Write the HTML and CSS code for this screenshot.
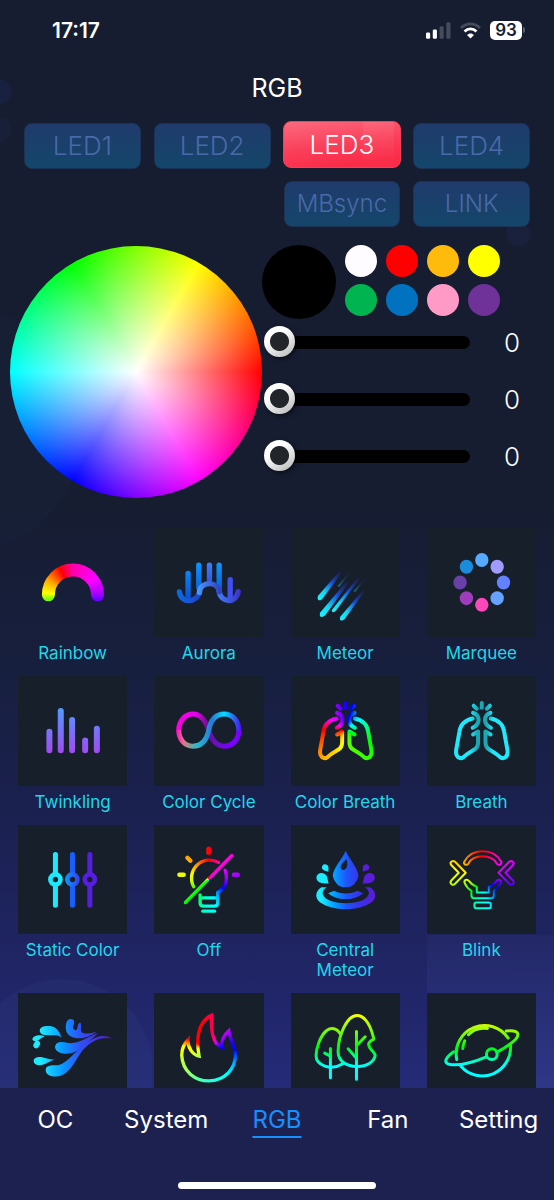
FILE: index.html
```html
<!DOCTYPE html>
<html lang="en">
<head>
    <title>RGB</title>
    <meta charset="UTF-8">
    <meta name="viewport" content="width=device-width, initial-scale=1.0">
    <link rel="stylesheet" href="styles.css">
</head>
<body>
  <div class="app">
    <div class="status-bar">
      <span class="time">17:17</span>
      <div class="status-icons">
        <svg class="signal" viewBox="0 0 24 16">
          <rect x="0" y="10" width="4" height="6" rx="1.3" fill="#fff"/>
          <rect x="6.5" y="7" width="4" height="9" rx="1.3" fill="#fff"/>
          <rect x="13" y="4" width="4" height="12" rx="1.3" fill="#454b5b"/>
          <rect x="19.5" y="0" width="4" height="16" rx="1.3" fill="#454b5b"/>
        </svg>
        <svg class="wifi" viewBox="0 0 60 48" fill="none" stroke-width="8">
          <path d="M3 17 C18 1 42 1 57 17" stroke="#454b5b"/>
          <path d="M13 27 C23 17 37 17 47 27" stroke="#fff"/>
          <path d="M20 37 C26 31 34 31 40 37 L30 47Z" fill="#fff"/>
        </svg>
        <span class="battery">93</span>
      </div>
    </div>

    <h1 class="title">RGB</h1>

    <div class="channels">
      <button class="channel">LED1</button>
      <button class="channel">LED2</button>
      <button class="channel active">LED3</button>
      <button class="channel">LED4</button>
      <button class="channel small third">MBsync</button>
      <button class="channel small">LINK</button>
    </div>

    <div class="picker">
      <div class="wheel"></div>
      <div class="controls">
        <div class="colors">
          <div class="current"></div>
          <div class="swatches">
            <button class="swatch white" aria-label="White"></button>
            <button class="swatch red" aria-label="Red"></button>
            <button class="swatch orange" aria-label="Orange"></button>
            <button class="swatch yellow" aria-label="Yellow"></button>
            <button class="swatch green" aria-label="Green"></button>
            <button class="swatch blue" aria-label="Blue"></button>
            <button class="swatch pink" aria-label="Pink"></button>
            <button class="swatch purple" aria-label="Purple"></button>
          </div>
        </div>
        <div class="slider-row">
          <input type="range" id="red" min="0" max="255" value="0" aria-label="Red">
          <output for="red">0</output>
        </div>
        <div class="slider-row">
          <input type="range" id="green" min="0" max="255" value="0" aria-label="Green">
          <output for="green">0</output>
        </div>
        <div class="slider-row">
          <input type="range" id="blue" min="0" max="255" value="0" aria-label="Blue">
          <output for="blue">0</output>
        </div>
      </div>
    </div>

    <div class="effects">
      <button class="effect selected">
        <svg class="tile" viewBox="52 26 327 327">
          <mask id="rainbowMask"><path d="M143 226 A73 74 0 0 1 290 226" fill="none" stroke="#fff" stroke-width="39" stroke-linecap="round"/></mask>
          <foreignObject x="52" y="26" width="327" height="327" mask="url(#rainbowMask)"><div class="hue hue-rainbow"></div></foreignObject>
        </svg>
        <span>Rainbow</span>
      </button>

      <button class="effect">
        <svg class="tile" viewBox="462 26 327 327" fill="none" stroke-linecap="round">
          <linearGradient id="barBlue" gradientUnits="userSpaceOnUse" x1="0" y1="130" x2="0" y2="240"><stop offset="0" stop-color="#0a95ff"/><stop offset="1" stop-color="#0b4fcf"/></linearGradient>
          <linearGradient id="barSoft" gradientUnits="userSpaceOnUse" x1="0" y1="130" x2="0" y2="200"><stop offset="0" stop-color="#3b7dfb"/><stop offset="1" stop-color="#3150d8"/></linearGradient>
          <linearGradient id="waveA" gradientUnits="userSpaceOnUse" x1="530" y1="0" x2="605" y2="0"><stop offset="0" stop-color="#0a6be0"/><stop offset="1" stop-color="#2340c8"/></linearGradient>
          <linearGradient id="waveB" gradientUnits="userSpaceOnUse" x1="590" y1="0" x2="665" y2="0"><stop offset="0" stop-color="#4a9bff"/><stop offset="1" stop-color="#2b3bbd"/></linearGradient>
          <linearGradient id="waveC" gradientUnits="userSpaceOnUse" x1="650" y1="0" x2="722" y2="0"><stop offset="0" stop-color="#4280f5"/><stop offset="1" stop-color="#3a30c8"/></linearGradient>
          <g stroke-width="16">
            <path d="M564 162V236M596 137V205M657 137V212" stroke="url(#barBlue)"/>
            <path d="M628 137V182" stroke="url(#barSoft)"/>
            <path d="M690 181V232" stroke="#4050ee"/>
            <path d="M538 217C542 252 590 252 598 217" stroke="url(#waveA)"/>
            <path d="M657 215C662 252 708 252 714 217" stroke="url(#waveC)"/>
            <path d="M598 219C600 184 654 184 657 217" stroke="url(#waveB)"/>
          </g>
        </svg>
        <span>Aurora</span>
      </button>

      <button class="effect">
        <svg class="tile" viewBox="42 26 327 327">
          <linearGradient id="trail" x1="0" y1="1" x2="1" y2="0"><stop offset="0" stop-color="#1ef3ff"/><stop offset=".28" stop-color="#14d5f5"/><stop offset=".6" stop-color="#1550d8"/><stop offset="1" stop-color="#2a1a80" stop-opacity=".2"/></linearGradient>
          <linearGradient id="trailDim" x1="0" y1="1" x2="1" y2="0"><stop offset="0" stop-color="#1b6b80"/><stop offset="1" stop-color="#1b2a50" stop-opacity=".2"/></linearGradient>
          <g fill="url(#trail)">
            <path d="M123 229L188 155L194 160L135 239Q127 245 123 241Q120 236 123 229Z"/>
            <path d="M130 278L208 186L218 186L144 288Q134 295 129 290Q126 284 130 278Z"/>
            <path d="M166 269L242 174L248 178L175 275Q168 280 165 277Q163 273 166 269Z"/>
            <path d="M190 291L256 214L262 217L202 299Q194 305 189 301Q187 296 190 291Z"/>
          </g>
          <g fill="url(#trailDim)">
            <path d="M183 197L224 150L188 202Q182 205 183 197Z"/>
            <path d="M231 212L266 174L236 216Q230 220 231 212Z"/>
          </g>
        </svg>
        <span>Meteor</span>
      </button>

      <button class="effect">
        <svg class="tile" viewBox="451 26 327 327">
          <ellipse cx="615" cy="122" rx="20" ry="21" fill="#56aaff"/>
          <ellipse cx="661" cy="142" rx="20" ry="21" fill="#a09cff"/>
          <ellipse cx="680" cy="189" rx="20" ry="21" fill="#6282ff"/>
          <ellipse cx="661" cy="236" rx="20" ry="21" fill="#66a2ff"/>
          <ellipse cx="615" cy="256" rx="20" ry="21" fill="#ff46bb"/>
          <ellipse cx="569" cy="236" rx="20" ry="21" fill="#9f3cbb"/>
          <ellipse cx="550" cy="189" rx="20" ry="21" fill="#6840a8"/>
          <ellipse cx="569" cy="142" rx="20" ry="21" fill="#1b8cdb"/>
        </svg>
        <span>Marquee</span>
      </button>

      <button class="effect">
        <svg class="tile" viewBox="52 21 327 327">
          <linearGradient id="twinkle" gradientUnits="userSpaceOnUse" x1="0" y1="117" x2="0" y2="250"><stop offset="0" stop-color="#5299ff"/><stop offset="1" stop-color="#a04cf0"/></linearGradient>
          <path d="M146 188V243M180 126V243M214 153V243M253 214V243M288 179V243" stroke="url(#twinkle)" stroke-width="18" stroke-linecap="round"/>
        </svg>
        <span>Twinkling</span>
      </button>

      <button class="effect">
        <svg class="tile" viewBox="462 21 327 327" fill="none" stroke-width="15">
          <linearGradient id="cycleUnder" gradientUnits="userSpaceOnUse" x1="530" y1="0" x2="690" y2="0"><stop offset="0" stop-color="#ff00e0"/><stop offset=".35" stop-color="#e800f0"/><stop offset=".58" stop-color="#6a0f90"/><stop offset=".72" stop-color="#6a10c0"/><stop offset="1" stop-color="#7a00ff"/></linearGradient>
          <linearGradient id="cycleOver" gradientUnits="userSpaceOnUse" x1="530" y1="0" x2="722" y2="0"><stop offset="0" stop-color="#ff10c8"/><stop offset=".1" stop-color="#e8708a"/><stop offset=".2" stop-color="#8a9c90"/><stop offset=".32" stop-color="#22bcd0"/><stop offset=".55" stop-color="#2a78d8"/><stop offset=".74" stop-color="#00e0ff"/><stop offset=".9" stop-color="#3060ee"/><stop offset="1" stop-color="#4a10ff"/></linearGradient>
          <path d="M536 184C536 156 554 135 578 135C602 135 616 152 626 183C634 212 650 231 673 231C698 231 716 210 716 183" stroke="url(#cycleUnder)"/>
          <path d="M536 183C536 213 556 231 578 231C606 231 620 212 626 183C632 152 648 135 672 135C698 135 716 156 716 184" stroke="url(#cycleOver)"/>
        </svg>
        <span>Color Cycle</span>
      </button>

      <button class="effect">
        <svg class="tile" viewBox="42 21 327 327">
          <defs>
            <g id="lungHalf">
              <path d="M182 110L191 119M180 131C202 139 202 165 179 176"/>
              <path d="M179 148C155 153 142 166 139 188L129 244C127 263 140 271 151 264C165 250 173 248 183 242C193 236 195 231 195 220V187L180 196"/>
            </g>
            <g id="lungs" fill="none" stroke-width="12" stroke-linecap="round" stroke-linejoin="round">
              <path d="M206 102V116"/>
              <use href="#lungHalf"/>
              <use href="#lungHalf" transform="matrix(-1 0 0 1 412 0)"/>
            </g>
          </defs>
          <mask id="lungMask"><use href="#lungs" stroke="#fff"/></mask>
          <foreignObject x="42" y="21" width="327" height="327" mask="url(#lungMask)"><div class="hue hue-breath"></div></foreignObject>
        </svg>
        <span>Color Breath</span>
      </button>

      <button class="effect">
        <svg class="tile" viewBox="42 21 327 327">
          <linearGradient id="breath" gradientUnits="userSpaceOnUse" x1="121" y1="0" x2="291" y2="0"><stop offset=".3" stop-color="#1eeafc"/><stop offset=".42" stop-color="#1ca6b2"/><stop offset=".58" stop-color="#1ca6b2"/><stop offset=".7" stop-color="#1eeafc"/></linearGradient>
          <mask id="breathMask"><use href="#lungs" stroke="#fff"/></mask>
          <rect x="42" y="21" width="327" height="327" fill="url(#breath)" mask="url(#breathMask)"/>
        </svg>
        <span>Breath</span>
      </button>

      <button class="effect">
        <svg class="tile" viewBox="52 15 327 327" fill="none" stroke-linecap="round">
          <linearGradient id="knob" gradientUnits="userSpaceOnUse" x1="194" y1="0" x2="237" y2="0"><stop offset="0" stop-color="#0a98ff"/><stop offset="1" stop-color="#3c38ec"/></linearGradient>
          <g stroke="#1ce9fc"><path d="M164 103V160M164 196V255" stroke-width="15"/><circle cx="164" cy="178" r="15" stroke-width="14"/></g>
          <g stroke="#1560ff"><path d="M215 103V160M215 196V255" stroke-width="15"/><circle cx="215" cy="178" r="15" stroke="url(#knob)" stroke-width="14"/></g>
          <g stroke="#561fdf"><path d="M267 103V160M267 196V255" stroke-width="15"/><circle cx="267" cy="178" r="15" stroke-width="14"/></g>
        </svg>
        <span>Static Color</span>
      </button>

      <button class="effect">
        <svg class="tile" viewBox="462 15 327 327">
          <mask id="offMask">
            <g fill="none" stroke="#fff" stroke-width="10" stroke-linecap="round">
              <path d="M655 127A54 54 0 0 0 581 200"/>
              <path d="M675 151C685 182 676 203 653 217V248Q653 258 643 258H610Q600 258 600 248V224M600 233H653"/>
              <path d="M608 273H643"/>
              <path d="M556 247L695 106"/>
              <path d="M626 87V97" stroke-width="15"/>
              <path d="M562 113L571 122M538 164H551M701 164H713" stroke-width="13"/>
            </g>
          </mask>
          <foreignObject x="462" y="15" width="327" height="327" mask="url(#offMask)"><div class="hue hue-bulb"></div></foreignObject>
        </svg>
        <span>Off</span>
      </button>

      <button class="effect">
        <svg class="tile" viewBox="42 15 327 327">
          <linearGradient id="splash" gradientUnits="userSpaceOnUse" x1="118" y1="0" x2="294" y2="0"><stop offset=".08" stop-color="#1eeafe"/><stop offset=".3" stop-color="#00a2ff"/><stop offset=".52" stop-color="#1f55fa"/><stop offset=".75" stop-color="#3b30e8"/><stop offset="1" stop-color="#5c1bd6"/></linearGradient>
          <g fill="url(#splash)" fill-rule="evenodd">
            <path d="M206 92C195 118 167 145 167 168A39 40 0 0 0 244 168C244 145 216 118 206 92ZM208 117C198 128 190 134 191 143C193 154 207 152 210 138C211 130 211 124 208 117Z"/>
            <path d="M171 212C190 223 222 223 241 212L258 219C230 243 182 243 153 219Z"/>
            <path d="M133 201H149C120 220 145 248 206 249C267 248 292 220 263 201H278C300 215 298 235 282 247C245 274 167 274 130 247C114 235 112 215 133 201Z"/>
          </g>
          <g fill="#1eeafe"><path d="M135 139C139 129 152 132 154 141V155C147 152 131 150 135 139Z"/><path d="M118 172C119 155 144 154 150 170C152 177 152 183 155 190C143 191 118 190 118 172Z"/></g>
          <g fill="#5a1dd9" transform="matrix(-1 0 0 1 411 0)"><path d="M135 139C139 129 152 132 154 141V155C147 152 131 150 135 139Z"/><path d="M118 172C119 155 144 154 150 170C152 177 152 183 155 190C143 191 118 190 118 172Z"/></g>
        </svg>
        <span>Central Meteor</span>
      </button>

      <button class="effect">
        <svg class="tile" viewBox="451 15 327 327">
          <mask id="blinkMask">
            <g fill="none" stroke="#fff" stroke-width="6" stroke-linejoin="round">
              <path d="M563 124C585 83 650 83 673 124C677 133 665 138 660 130C644 101 590 101 575 130C570 138 558 133 563 124Z"/>
              <path d="M523 134C518 127 528 119 535 125L567 158L535 191C528 198 518 190 523 182L546 158Z"/>
              <path d="M709 134C714 127 704 119 697 125L665 158L697 191C704 198 714 190 709 182L686 158Z"/>
              <path d="M564 189C560 179 571 175 577 183C583 192 590 196 600 200V217H636V200C646 196 653 192 659 183C664 175 676 180 672 189C665 202 658 207 651 212V226Q651 234 643 234H592Q584 234 584 226V212C576 207 569 202 564 189Z"/>
              <rect x="593" y="247" width="49" height="17" rx="5"/>
            </g>
          </mask>
          <foreignObject x="451" y="15" width="327" height="327" mask="url(#blinkMask)"><div class="hue hue-bulb"></div></foreignObject>
        </svg>
        <span>Blink</span>
      </button>

      <button class="effect" aria-label="Wave">
        <svg class="tile" viewBox="52 40 327 327">
          <linearGradient id="wave" gradientUnits="userSpaceOnUse" x1="95" y1="0" x2="335" y2="0"><stop offset=".1" stop-color="#1eeafe"/><stop offset=".38" stop-color="#0898ff"/><stop offset=".6" stop-color="#3050f5"/><stop offset="1" stop-color="#5a18c8"/></linearGradient>
          <g fill="url(#wave)">
            <path d="M135 272C134 256 150 256 170 256C210 250 235 187 295 170C312 166 325 172 335 176C300 170 275 180 247 210C225 236 208 290 165 290C148 290 136 284 135 272Z"/>
            <path d="M163 203C163 186 182 184 202 190C235 194 260 170 294 160C264 180 238 222 197 222C178 222 164 214 163 203Z"/>
            <path d="M195 145C195 130 198 118 210 118C225 118 220 132 217 142C216 152 228 155 230 145C231 135 233 129 238 129C244 132 238 150 243 158C255 164 275 160 288 155C270 170 245 178 225 175C205 172 195 160 195 145Z"/>
            <path d="M117 152C117 140 135 137 148 139C168 142 176 155 182 173C170 163 150 168 135 166C125 166 117 160 117 152Z"/>
            <path d="M95 178C98 166 118 164 132 170C120 172 116 184 104 184C98 184 95 182 95 178Z"/>
            <ellipse cx="108" cy="194" rx="9" ry="12" transform="rotate(30 108 194)"/>
            <path d="M99 243C99 232 115 230 127 233C140 236 150 239 163 240C145 243 135 256 115 256C104 256 99 250 99 243Z"/>
          </g>
        </svg>
      </button>

      <button class="effect" aria-label="Fire">
        <svg class="tile" viewBox="462 40 327 327">
          <mask id="fireMask"><path d="M634 107C600 122 585 165 597 229C578 225 563 205 564 180C552 192 545 206 545 226C547 275 585 303 626 303C675 303 706 265 706 225C705 200 690 180 686 153C672 165 661 185 667 203C638 195 632 150 634 107Z" fill="none" stroke="#fff" stroke-width="10"/></mask>
          <foreignObject x="462" y="40" width="327" height="327" mask="url(#fireMask)"><div class="hue hue-fire"></div></foreignObject>
        </svg>
      </button>

      <button class="effect" aria-label="Forest">
        <svg class="tile" viewBox="42 40 327 327" fill="none" stroke-width="9" stroke-linecap="round" stroke-linejoin="round">
          <linearGradient id="forest" gradientUnits="userSpaceOnUse" x1="0" y1="103" x2="0" y2="300"><stop offset="0" stop-color="#ffff00"/><stop offset=".5" stop-color="#00f810"/><stop offset=".8" stop-color="#00ffff"/></linearGradient>
          <g stroke="url(#forest)">
            <path d="M290 178C282 142 265 107 240 107C210 107 184 165 183 215C183 245 210 260 240 260C270 260 292 245 294 226C289 212 271 205 275 190C278 184 283 182 290 178Z"/>
            <path d="M238 155V298M238 198L264 171M213 207L238 235"/>
            <path d="M190 163C180 145 160 141 148 153C130 168 117 205 117 228C117 255 160 275 197 252"/>
            <path d="M160 206V294M143 220L160 229"/>
          </g>
        </svg>
      </button>

      <button class="effect" aria-label="Planet">
        <svg class="tile" viewBox="451 40 327 327" fill="none" stroke-width="9" stroke-linecap="round">
          <linearGradient id="planet" gradientUnits="userSpaceOnUse" x1="0" y1="118" x2="0" y2="290"><stop offset="0" stop-color="#ffff00"/><stop offset=".5" stop-color="#00f810"/><stop offset=".8" stop-color="#00ffff"/></linearGradient>
          <g stroke="url(#planet)">
            <path d="M540 239A85 85 0 0 1 694 175"/>
            <path d="M701 197A85 86 0 0 1 553 260"/>
            <path d="M688 154C729 149 728 166 715 180C700 195 680 207 660 217M629 231C590 247 545 258 520 254C497 250 508 232 531 216"/>
            <circle cx="645" cy="223" r="16"/>
            <path d="M575 165C590 148 610 143 632 146M564 183C560 192 558 198 558 206"/>
          </g>
        </svg>
      </button>
    </div>

    <nav class="tab-bar">
      <div class="tabs">
        <a href="#">OC</a>
        <a href="#">System</a>
        <a href="#" class="active">RGB</a>
        <a href="#">Fan</a>
        <a href="#">Setting</a>
      </div>
      <div class="home-indicator"></div>
    </nav>
  </div>
</body>
</html>
```
FILE: styles.css
```css
* {
    box-sizing: border-box;
}

body {
    margin: 0;
    background-color: #161d31;
    color: white;
    font-family: Inter, Roboto, sans-serif;
}

button {
    border: none;
    padding: 0;
    background: none;
    font-family: inherit;
    cursor: pointer;
}

/* bubbles behind the content sit on top of the night gradient */
.app {
    display: flex;
    flex-direction: column;
    height: 100vh;
    background-image:
        radial-gradient(circle at -2px 92px, #192140 12px, transparent 14px),
        radial-gradient(circle at -2px 130px, #181f38 12px, transparent 14px),
        radial-gradient(circle at 518px 234px, #19213c 11px, transparent 13px),
        radial-gradient(circle at -40px 430px, rgba(24, 40, 68, 0.2) 122px, transparent 124px),
        radial-gradient(circle at 62px 1070px, rgba(44, 56, 120, 0.3) 90px, transparent 91px),
        linear-gradient(#161d31 0, #161d31 500px, #171f3e 660px, #1b2150 820px, #21266a 1000px, #252b78 1088px);
}

.status-bar {
    display: flex;
    align-items: center;
    justify-content: space-between;
    height: 60px;
    padding: 0 29px 0 52px;
}

.time {
    font-size: 21px;
    font-weight: 600;
}

.status-icons {
    display: flex;
    align-items: center;
    gap: 9px;
}

.signal {
    width: 25px;
    height: 17px;
}

.wifi {
    width: 21px;
    height: 17px;
}

.battery {
    position: relative;
    width: 32px;
    height: 19px;
    margin-right: 3px;
    border-radius: 5px;
    background-color: white;
    color: #161d31;
    font-size: 17px;
    font-weight: 600;
    line-height: 19px;
    text-align: center;
}

.battery::after {
    content: "";
    position: absolute;
    top: 6px;
    right: -3px;
    width: 2px;
    height: 6px;
    border-radius: 0 2px 2px 0;
    background-color: #5a606e;
}

.title {
    margin: 0;
    font-size: 25px;
    font-weight: 400;
    line-height: 56px;
    text-align: center;
}

.channels {
    display: grid;
    grid-template-columns: repeat(4, 1fr);
    gap: 12px 13px;
    padding: 7px 24px 0;
}

.channel {
    height: 46px;
    border: 1px solid #1c3355;
    border-radius: 8px;
    background: linear-gradient(#1f3b6c, #14466a);
    color: #4a69a8;
    font-size: 26px;
    font-weight: 300;
    line-height: 44px;
}

.channel.small {
    font-size: 24px;
}

.channel.third {
    grid-column: 3;
}

.channel.active {
    height: 47px;
    margin: -2px -1px 1px;
    border-color: #f0405a;
    background:
        linear-gradient(rgba(255, 255, 255, 0.08), rgba(255, 255, 255, 0)) 79px 0 / 31px 100% no-repeat,
        linear-gradient(172deg, #fb6a7e, #fa3f5a 50%, #fa2c48 85%);
    color: white;
}

.picker {
    display: flex;
    align-items: flex-start;
    padding: 18px 0 30px 10px;
}

.wheel {
    width: 252px;
    aspect-ratio: 1;
    margin-top: 1px;
    border-radius: 50%;
    background:
        radial-gradient(closest-side, white, rgba(255, 255, 255, 0)),
        conic-gradient(from 90deg, #f00, #f0f, #00f, #0ff, #0f0, #ff0, #f00);
}

.controls {
    flex: 1;
}

.colors {
    display: flex;
    gap: 9px;
    height: 75px;
}

.current {
    width: 74px;
    height: 74px;
    border-radius: 50%;
    background-color: black;
}

.swatches {
    display: grid;
    grid-template-columns: repeat(4, 32px);
    gap: 7px 9px;
    align-content: start;
}

.swatch {
    height: 32px;
    border-radius: 50%;
}

.white { background-color: #fffcff; }
.red { background-color: #ff0000; }
.orange { background-color: #ffbb0c; }
.yellow { background-color: #ffff00; }
.green { background-color: #00b450; }
.blue { background-color: #0072c0; }
.pink { background-color: #ff99c6; }
.purple { background-color: #6f3298; }

.slider-row {
    display: flex;
    align-items: center;
    height: 44px;
    margin-bottom: 13px;
    padding-left: 2px;
}

.slider-row:last-child {
    margin-bottom: 0;
}

.slider-row input {
    flex: 1;
    min-width: 0;
    height: 32px;
    margin: 0;
    appearance: none;
    background: none;
}

.slider-row input::-webkit-slider-runnable-track {
    height: 13px;
    border-radius: 7px;
    background-color: black;
}

.slider-row input::-webkit-slider-thumb {
    appearance: none;
    width: 31px;
    height: 31px;
    margin-top: -10px;
    border-radius: 50%;
    background: radial-gradient(circle, #22262a 9px, transparent 10px), linear-gradient(145deg, #ffffff 35%, #b4b4b4);
    box-shadow: 2px 2px 4px rgba(0, 0, 0, 0.5);
}

.slider-row output {
    width: 84px;
    font-size: 26px;
    font-weight: 300;
    text-align: center;
}

.effects {
    flex: 1;
    min-height: 0;
    overflow-y: auto;
    scrollbar-width: none;
    display: grid;
    grid-template-columns: repeat(4, 1fr);
    align-content: start;
    gap: 13px 27px;
    padding: 0 18px;
    background: linear-gradient(rgba(90, 110, 200, 0.06), rgba(90, 110, 200, 0.18)) 427px 407px / 127px 153px no-repeat;
}

.effect {
    display: flex;
    flex-direction: column;
    gap: 6px;
    color: #1fd8ea;
    font-size: 17px;
    line-height: 20px;
    text-align: center;
}

.effect span {
    width: 100%;
}

.tile {
    width: 100%;
    aspect-ratio: 1;
    background-color: #171f2b;
}

.selected .tile {
    background: none;
}

.hue {
    width: 100%;
    height: 100%;
}

.hue-rainbow {
    background: conic-gradient(from 0deg at 50% 62%, #f0a, #f0f 50deg, #b0f 80deg, #60f 100deg, #60f 140deg, #7f0 220deg, #7f0 262deg, #ff0 276deg, #fa0 302deg, #f00 335deg, #f0a);
}

.hue-breath {
    background: conic-gradient(#10f, #00f 15deg, #08f 30deg, #0ff 48deg, #0f8 80deg, #0f0 115deg, #6f0 170deg, #ff0 195deg, #fa0 220deg, #f60 240deg, #f00 272deg, #f0f 305deg, #c0f 325deg, #80f 340deg, #10f);
}

.hue-bulb {
    background: conic-gradient(#f00, #f0a 30deg, #f0f 50deg, #90f 85deg, #00f 120deg, #0ff 165deg, #0fc 190deg, #0f0 225deg, #cf0 265deg, #ff0 290deg, #f90 320deg, #f00);
}

.hue-fire {
    background: conic-gradient(from 0deg at 52% 52%, #f04, #f0a 20deg, #b0f 42deg, #20f 70deg, #00f 90deg, #0af 120deg, #0ff 145deg, #3fc 190deg, #9f6 225deg, #cf3 255deg, #ff0 270deg, #ff0 277deg, #f00 296deg, #f00 340deg, #f04);
}

.tab-bar {
    display: flex;
    flex-direction: column;
    justify-content: space-between;
    align-items: center;
    height: 112px;
    padding: 15px 0 11px;
    background-color: #1d2150;
}

.tabs {
    display: flex;
    width: 100%;
}

.tabs a {
    flex: 1;
    display: flex;
    justify-content: center;
    color: white;
    font-size: 24px;
    line-height: 34px;
    text-decoration: none;
}

.tabs .active {
    color: #1590ff;
    text-decoration: underline;
    text-decoration-thickness: 2px;
    text-underline-offset: 8px;
}

.home-indicator {
    width: 198px;
    height: 7px;
    border-radius: 4px;
    background-color: white;
}
```
